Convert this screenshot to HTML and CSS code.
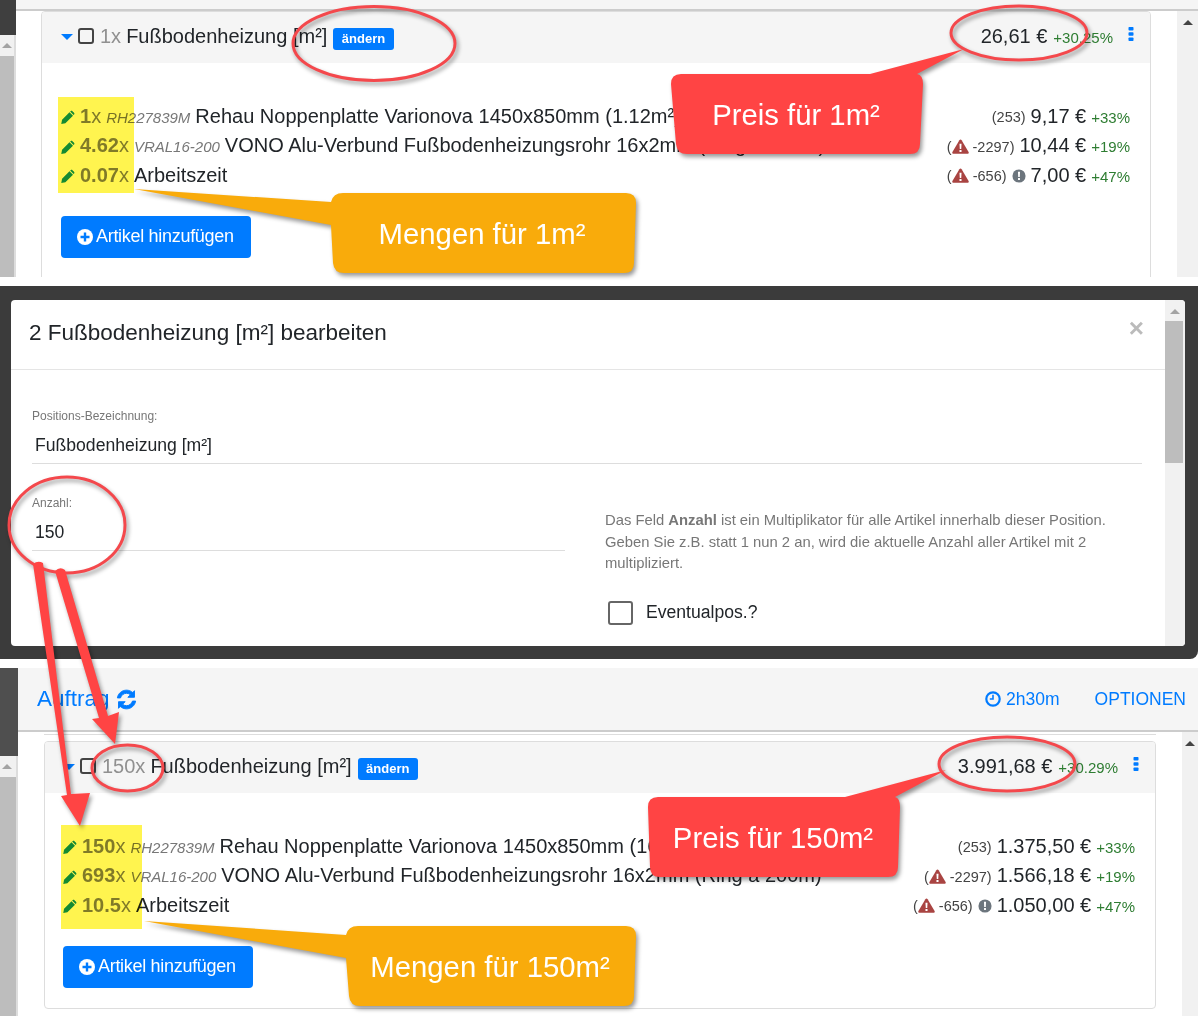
FILE: index.html
```html
<!DOCTYPE html>
<html lang="de">
<head>
    <meta charset="UTF-8">
    <meta name="viewport" content="width=device-width, initial-scale=1.0">
    <title>Fußbodenheizung Mengen und Preise</title>
    <link rel="stylesheet" href="styles.css">
</head>
<body>

<svg class="icon-defs" aria-hidden="true">
    <symbol id="i-pencil" viewBox="0 0 16 16">
        <path d="M9.700 2.500l4 4-8.700 8.600-4.700.9.900-4.800z M11 1.300c.6-.6 1.500-.6 2.100 0l1.800 1.800c.6.6.6 1.500 0 2.100l-.5.5-4-4z"/>
    </symbol>
    <symbol id="i-warn" viewBox="0 0 18 16">
        <path d="M9 .5c.5 0 .9.3 1.200.8l7.400 12.600c.5.900-.1 1.900-1.100 1.900H1.500c-1 0-1.600-1-1.100-1.900L7.800 1.300C8.100.8 8.500.5 9 .5z"/>
        <path fill="#fff" d="M7.900 5h2.200l-.3 5.600H8.200z M7.900 11.800h2.200v2H7.900z"/>
    </symbol>
    <symbol id="i-info" viewBox="0 0 16 16">
        <circle cx="8" cy="8" r="7.500"/>
        <path fill="#fff" d="M6.800 3.200h2.400l-.3 6H7.100z M6.900 10.400h2.200v2.300H6.900z"/>
    </symbol>
    <symbol id="i-plus" viewBox="0 0 16 16">
        <circle cx="8" cy="8" r="8" fill="#fff"/>
        <path fill="#007bff" d="M6.800 3.500h2.400v3.300h3.300v2.400H9.200v3.300H6.800V9.200H3.500V6.800h3.300z"/>
    </symbol>
    <symbol id="i-kebab" viewBox="0 0 6 16">
        <rect x="0.500" y="1" width="5" height="3.500" rx="0.800"/>
        <rect x="0.500" y="6.300" width="5" height="3.500" rx="0.800"/>
        <rect x="0.500" y="11.500" width="5" height="3.500" rx="0.800"/>
    </symbol>
</svg>

<div class="page">

    <!-- Oben: Position mit Menge 1 -->
    <section class="shot shot-single">
        <div class="rail-left">
            <div class="rail-dark"></div>
            <div class="rail-arrow"></div>
            <div class="rail-thumb"></div>
        </div>
        <div class="shot-main">
            <div class="strip"></div>
            <div class="shot-body">
                <div class="shot-content">
                    <div class="card">
                        <div class="card-header">
                            <span class="caret"></span>
                            <span class="box"></span>
                            <span class="qty-head">1x</span>
                            <span class="pos-name">Fußbodenheizung [m²]</span>
                            <span class="badge">ändern</span>
                            <span class="head-price">26,61 €</span>
                            <span class="pct">+30.25%</span>
                            <svg class="kebab"><use href="#i-kebab"/></svg>
                        </div>
                        <div class="card-body">
                            <div class="row">
                                <svg class="pencil"><use href="#i-pencil"/></svg>
                                <span class="qty"><b>1</b>x</span>
                                <i class="code">RH227839M</i>
                                <span class="name">Rehau Noppenplatte Varionova 1450x850mm (1.12m²)</span>
                                <span class="row-right">
                                    <span class="note">(253)</span>
                                    <span class="price">9,17 €</span>
                                    <span class="pct">+33%</span>
                                </span>
                            </div>
                            <div class="row">
                                <svg class="pencil"><use href="#i-pencil"/></svg>
                                <span class="qty"><b>4.62</b>x</span>
                                <i class="code">VRAL16-200</i>
                                <span class="name">VONO Alu-Verbund Fußbodenheizungsrohr 16x2mm (Ring a 200m)</span>
                                <span class="row-right">
                                    <span class="note">(<svg class="warn"><use href="#i-warn"/></svg> -2297)</span>
                                    <span class="price">10,44 €</span>
                                    <span class="pct">+19%</span>
                                </span>
                            </div>
                            <div class="row">
                                <svg class="pencil"><use href="#i-pencil"/></svg>
                                <span class="qty"><b>0.07</b>x</span>
                                <span class="name">Arbeitszeit</span>
                                <span class="row-right">
                                    <span class="note">(<svg class="warn"><use href="#i-warn"/></svg> -656)</span>
                                    <svg class="info"><use href="#i-info"/></svg>
                                    <span class="price">7,00 €</span>
                                    <span class="pct">+47%</span>
                                </span>
                            </div>
                            <button class="add-btn"><svg class="plus"><use href="#i-plus"/></svg>Artikel hinzufügen</button>
                        </div>
                    </div>
                </div>
                <div class="rail-right"><div class="rail-right-arrow"></div></div>
            </div>
        </div>
    </section>

    <!-- Mitte: Dialog -->
    <section class="shot-modal">
        <div class="modal">
            <div class="modal-main">
                <div class="modal-header">
                    <h2 class="modal-title">2 Fußbodenheizung [m²] bearbeiten</h2>
                    <span class="modal-close">×</span>
                </div>
                <div class="modal-body">
                    <div class="field">
                        <label class="field-label">Positions-Bezeichnung:</label>
                        <div class="field-value">Fußbodenheizung [m²]</div>
                    </div>
                    <div class="modal-grid">
                        <div class="field">
                            <label class="field-label">Anzahl:</label>
                            <div class="field-value">150</div>
                        </div>
                        <div class="modal-help">
                            <p>Das Feld <b>Anzahl</b> ist ein Multiplikator für alle Artikel innerhalb dieser Position. Geben Sie z.B. statt 1 nun 2 an, wird die aktuelle Anzahl aller Artikel mit 2 multipliziert.</p>
                            <div class="check-row">
                                <span class="check-box"></span>
                                <span>Eventualpos.?</span>
                            </div>
                        </div>
                    </div>
                </div>
            </div>
            <div class="modal-scroll">
                <div class="modal-scroll-arrow"></div>
                <div class="modal-scroll-thumb"></div>
            </div>
        </div>
    </section>

    <!-- Unten: Auftrag mit Menge 150 -->
    <section class="shot shot-order">
        <div class="rail-left">
            <div class="rail-dark"></div>
            <div class="rail-arrow"></div>
            <div class="rail-thumb"></div>
        </div>
        <div class="shot-main">
            <div class="toolbar">
                <span class="toolbar-title">Auftrag</span>
                <svg class="refresh" viewBox="0 0 20 20">
                    <path d="M17.600 1.600v6.300h-6.300l2.400-2.400C12.700 4.600 11.400 4.100 10 4.100c-2.700 0-5 1.800-5.700 4.400H1.300C2 4.200 5.600 1.100 10 1.100c2.300 0 4.400.9 6 2.300z"/>
                    <path d="M2.400 18.400v-6.300h6.300l-2.400 2.400c1 .9 2.300 1.400 3.700 1.400 2.700 0 5-1.800 5.700-4.400h3c-.7 4.300-4.300 7.400-8.700 7.400-2.300 0-4.400-.9-6-2.300z"/>
                </svg>
                <span class="toolbar-spacer"></span>
                <span class="toolbar-time">
                    <svg class="clock" viewBox="0 0 16 16">
                        <circle cx="8" cy="8" r="6.700" fill="none" stroke="currentColor" stroke-width="2.200"/>
                        <path d="M7.200 3.800h1.600v5H4.800V7.200h2.400z" fill="currentColor"/>
                    </svg>
                    2h30m
                </span>
                <span class="toolbar-link">OPTIONEN</span>
            </div>
            <div class="shot-body">
                <div class="shot-content">
                    <div class="card-sliver"></div>
                    <div class="card">
                        <div class="card-header">
                            <span class="caret"></span>
                            <span class="box"></span>
                            <span class="qty-head">150x</span>
                            <span class="pos-name">Fußbodenheizung [m²]</span>
                            <span class="badge">ändern</span>
                            <span class="head-price">3.991,68 €</span>
                            <span class="pct">+30.29%</span>
                            <svg class="kebab"><use href="#i-kebab"/></svg>
                        </div>
                        <div class="card-body">
                            <div class="row">
                                <svg class="pencil"><use href="#i-pencil"/></svg>
                                <span class="qty"><b>150</b>x</span>
                                <i class="code">RH227839M</i>
                                <span class="name">Rehau Noppenplatte Varionova 1450x850mm (168m²)</span>
                                <span class="row-right">
                                    <span class="note">(253)</span>
                                    <span class="price">1.375,50 €</span>
                                    <span class="pct">+33%</span>
                                </span>
                            </div>
                            <div class="row">
                                <svg class="pencil"><use href="#i-pencil"/></svg>
                                <span class="qty"><b>693</b>x</span>
                                <i class="code">VRAL16-200</i>
                                <span class="name">VONO Alu-Verbund Fußbodenheizungsrohr 16x2mm (Ring a 200m)</span>
                                <span class="row-right">
                                    <span class="note">(<svg class="warn"><use href="#i-warn"/></svg> -2297)</span>
                                    <span class="price">1.566,18 €</span>
                                    <span class="pct">+19%</span>
                                </span>
                            </div>
                            <div class="row">
                                <svg class="pencil"><use href="#i-pencil"/></svg>
                                <span class="qty"><b>10.5</b>x</span>
                                <span class="name">Arbeitszeit</span>
                                <span class="row-right">
                                    <span class="note">(<svg class="warn"><use href="#i-warn"/></svg> -656)</span>
                                    <svg class="info"><use href="#i-info"/></svg>
                                    <span class="price">1.050,00 €</span>
                                    <span class="pct">+47%</span>
                                </span>
                            </div>
                            <button class="add-btn"><svg class="plus"><use href="#i-plus"/></svg>Artikel hinzufügen</button>
                        </div>
                    </div>
                    <div class="card-next"></div>
                </div>
                <div class="rail-right"><div class="rail-right-arrow"></div></div>
            </div>
        </div>
    </section>

    <!-- Gelbe Markierungen -->
    <div class="marker marker-single"></div>
    <div class="marker marker-order"></div>

    <!-- Anmerkungen ueber dem Screenshot -->
    <svg class="notes" viewBox="0 0 1198 1016">
        <g class="note-shadow">
            <ellipse class="ring" cx="374" cy="43.500" rx="81" ry="37"/>
            <ellipse class="ring" cx="1019" cy="33" rx="68" ry="27"/>
            <ellipse class="ring" cx="67" cy="525" rx="58" ry="48"/>
            <ellipse class="ring" cx="127.500" cy="768" rx="35.500" ry="23"/>
            <ellipse class="ring" cx="1007" cy="764" rx="68" ry="27"/>

            <path class="fill-red" d="M33 564 Q38 560 43 563 L71 794 L90 793 L80 826 L61 796 L67 795 Z"/>
            <path class="fill-red" d="M55 571 Q60 566 65 570 L108 716 L119 712 L115 744 L92 719 L99 718 Z"/>

            <path class="fill-red" d="M681 74 L870 74 L964 49 L917 74 Q923 75 923 84 L920 144 Q920 154 910 154 L687 154 Q677 154 676 144 L671 84 Q671 74 681 74 Z"/>
            <path class="fill-orange" d="M134 189 L331 202 Q333 193 343 193 L626 193 Q636 193 636 203 L634 263 Q634 273 624 273 L344 273 Q334 273 333 263 L331 225 Z"/>
            <path class="fill-red" d="M658 797 L845 797 L946 770 L895 797 Q900 798 900 807 L898 867 Q898 877 888 877 L660 877 Q650 877 650 867 L648 807 Q648 797 658 797 Z"/>
            <path class="fill-orange" d="M144 921 L346 935 Q348 926 358 926 L626 926 Q636 926 636 936 L634 996 Q634 1006 624 1006 L360 1006 Q350 1006 349 996 L346 958 Z"/>
        </g>
        <text class="note-text" x="796" y="125">Preis für 1m²</text>
        <text class="note-text" x="482" y="244">Mengen für 1m²</text>
        <text class="note-text" x="773" y="848">Preis für 150m²</text>
        <text class="note-text" x="490" y="977">Mengen für 150m²</text>
    </svg>

</div>

</body>
</html>
```

FILE: styles.css
```css
* {
    box-sizing: border-box;
}
html, body {
    margin: 0;
    padding: 0;
    background-color: #fff;
}
body {
    font-family: "Liberation Sans", Arial, sans-serif;
    color: #212529;
}
.icon-defs {
    position: absolute;
    width: 0;
    height: 0;
}
.page {
    position: relative;
    width: 1198px;
    height: 1016px;
    overflow: hidden;
    background-color: #fff;
}

/* Screenshot frames */
.shot {
    display: flex;
    overflow: hidden;
}
.shot-single {
    height: 277px;
    margin-bottom: 9px;
}
.shot-order {
    height: 348px;
    margin-top: 9px;
}
.rail-left {
    flex: none;
    display: flex;
    flex-direction: column;
}
.shot-single .rail-left {
    width: 16px;
}
.shot-order .rail-left {
    width: 18px;
}
.rail-dark {
    background-color: #3f3f3f;
}
.shot-single .rail-dark {
    height: 35px;
}
.shot-order .rail-dark {
    height: 88px;
    background-color: #4f4f4f;
}
.rail-arrow {
    position: relative;
    height: 21px;
    background-color: #f1f1f1;
    border-right: 2px solid #ddd;
}
.rail-arrow::after {
    content: "";
    position: absolute;
    left: 2px;
    top: 8px;
    border-left: 5px solid transparent;
    border-right: 5px solid transparent;
    border-bottom: 5px solid #a3a3a3;
}
.rail-thumb {
    flex: 1;
    background-color: #bdbdbd;
    border-right: 2px solid #ddd;
}
.shot-main {
    flex: 1;
    display: flex;
    flex-direction: column;
    min-width: 0;
}
.strip {
    flex: none;
    height: 11px;
    background-color: #f5f5f5;
    border-bottom: 2px solid #ccc;
}
.shot-body {
    flex: 1;
    display: flex;
    min-height: 0;
}
.shot-content {
    flex: 1;
    min-width: 0;
    padding: 0 26px;
}
.shot-single .shot-content {
    padding-left: 25px;
}
.rail-right {
    flex: none;
    position: relative;
    background-color: #f1f1f1;
}
.shot-single .rail-right {
    width: 21px;
}
.shot-order .rail-right {
    width: 16px;
}
.rail-right-arrow {
    margin: 9px auto 0;
    width: 0;
    border-left: 5px solid transparent;
    border-right: 5px solid transparent;
    border-bottom: 5px solid #444;
}

/* Card */
.card {
    border: 1px solid #ddd;
    border-radius: 4px;
    overflow: hidden;
    background-color: #fff;
}
.shot-single .card {
    min-height: 290px;
}
.card-sliver {
    height: 3px;
    border-bottom: 1px solid #ddd;
    margin-bottom: 6px;
}
.card-next {
    height: 10px;
    margin-top: 7px;
    border-top: 1px solid #ddd;
}
.card-header {
    display: flex;
    align-items: center;
    height: 51px;
    padding: 0 16px 3px 19px;
    background-color: #f5f5f5;
    font-size: 20px;
}
.shot-order .card-header {
    padding-left: 18px;
}
.caret {
    width: 0;
    margin-right: 5px;
    margin-top: 1px;
    border-left: 6px solid transparent;
    border-right: 6px solid transparent;
    border-top: 6px solid #007bff;
}
.box {
    width: 16px;
    height: 16px;
    border: 2px solid #444;
    border-radius: 3px;
    margin-right: 6px;
}
.qty-head {
    color: #909090;
    margin-right: 5px;
}
.badge {
    margin: 5px 0 0 6px;
    height: 22px;
    line-height: 22px;
    padding: 0 8.500px;
    background-color: #007bff;
    color: #fff;
    font-size: 13px;
    font-weight: bold;
    border-radius: 3px;
}
.head-price {
    margin-left: auto;
}
.pct {
    font-size: 15px;
    color: #2e7d32;
    margin-left: 6px;
    position: relative;
    top: 1px;
}
.kebab {
    width: 6px;
    height: 16px;
    margin-left: 15px;
    fill: #007bff;
    position: relative;
    top: -2px;
}
.card-body {
    padding: 38.500px 20px 20px 19px;
}
.shot-order .card-body {
    padding-left: 18px;
}
.row {
    display: flex;
    align-items: center;
    height: 29.500px;
    font-size: 20px;
    white-space: nowrap;
}
.pencil {
    flex: none;
    width: 14px;
    height: 14px;
    margin-right: 5px;
    fill: #14909f;
    position: relative;
    top: 1px;
}
.qty {
    color: #808080;
    margin-right: 5px;
}
.code {
    font-size: 15px;
    color: #777;
    margin-right: 5px;
    position: relative;
    top: 1px;
}
.name {
    flex: none;
}
.row-right {
    margin-left: auto;
    display: flex;
    align-items: center;
}
.row-right .pct {
    margin-left: 5px;
}
.note {
    font-size: 14.500px;
    color: #444;
    margin-right: 5px;
    position: relative;
    top: 1px;
}
.warn {
    width: 17px;
    height: 15px;
    fill: #a94442;
    vertical-align: -2px;
}
.info {
    width: 14px;
    height: 14px;
    fill: #6c757d;
    margin-right: 5px;
    position: relative;
    top: 1px;
}
.add-btn {
    display: flex;
    align-items: center;
    width: 190px;
    height: 42px;
    margin-top: 25.500px;
    padding: 0 0 0 16px;
    background-color: #007bff;
    color: #fff;
    border: none;
    border-radius: 4px;
    font-family: inherit;
    font-size: 18px;
    letter-spacing: -0.3px;
}
.plus {
    width: 16px;
    height: 16px;
    margin-right: 3px;
}

/* Dialog */
.shot-modal {
    height: 373px;
    padding: 14px 13px 13px 11px;
    background-color: #3b3b3b;
    border-radius: 0 0 8px 0;
    overflow: hidden;
}
.modal {
    display: flex;
    height: 346px;
    background-color: #fff;
    border-radius: 4px;
    overflow: hidden;
}
.modal-main {
    flex: 1;
    min-width: 0;
}
.modal-header {
    display: flex;
    align-items: center;
    justify-content: space-between;
    height: 70px;
    padding: 0 21px 4px 18px;
    border-bottom: 1px solid #e5e5e5;
}
.modal-title {
    margin: 0;
    font-size: 22.500px;
    font-weight: normal;
}
.modal-close {
    font-size: 26px;
    font-weight: bold;
    color: #bbb;
    margin-top: -8px;
}
.modal-body {
    padding: 39px 23px 0 21px;
}
.field-label {
    display: block;
    height: 14px;
    line-height: 14px;
    font-size: 12px;
    color: #777;
}
.field-value {
    height: 41px;
    line-height: 36px;
    padding: 4px 0 0 3px;
    font-size: 17.600px;
    border-bottom: 1px solid #ddd;
}
.modal-grid {
    display: grid;
    grid-template-columns: 533px 1fr;
    column-gap: 40px;
    margin-top: 32px;
}
.modal-help {
    color: #777;
    font-size: 14.800px;
    line-height: 21.500px;
}
.modal-help p {
    margin: 0;
    padding-top: 14px;
}
.check-row {
    display: flex;
    align-items: center;
    margin: 26px 0 0 3px;
    gap: 13px;
    font-size: 17.600px;
    color: #212529;
}
.check-box {
    width: 25px;
    height: 24px;
    border: 2px solid #666;
    border-radius: 3px;
}
.modal-scroll {
    flex: none;
    display: flex;
    flex-direction: column;
    width: 20px;
    background-color: #f1f1f1;
}
.modal-scroll-arrow {
    height: 21px;
    padding: 9px 0 0 5px;
}
.modal-scroll-arrow::after {
    content: "";
    display: block;
    width: 0;
    border-left: 5px solid transparent;
    border-right: 5px solid transparent;
    border-bottom: 5px solid #a3a3a3;
}
.modal-scroll-thumb {
    height: 142px;
    margin-right: 2px;
    background-color: #bdbdbd;
}

/* Toolbar */
.toolbar {
    flex: none;
    display: flex;
    align-items: center;
    height: 64px;
    padding: 0 12px 0 19px;
    background-color: #f5f5f5;
    border-bottom: 2px solid #ccc;
    color: #007bff;
    font-size: 17.500px;
}
.toolbar-title {
    font-size: 22.500px;
}
.refresh {
    width: 21px;
    height: 21px;
    margin-left: 6px;
    fill: #007bff;
    stroke: #007bff;
    stroke-width: 0.900;
}
.toolbar-spacer {
    flex: 1;
}
.clock {
    width: 16px;
    height: 16px;
    vertical-align: -2px;
}
.toolbar-link {
    margin-left: 35px;
}

/* Annotations */
.marker {
    position: absolute;
    background-color: #fff44f;
    mix-blend-mode: multiply;
}
.marker-single {
    left: 58px;
    top: 97px;
    width: 76px;
    height: 96px;
}
.marker-order {
    left: 61px;
    top: 825px;
    width: 81px;
    height: 104px;
}
.notes {
    position: absolute;
    left: 0;
    top: 0;
    width: 1198px;
    height: 1016px;
}
.note-shadow {
    filter: drop-shadow(2px 3px 2px rgba(0, 0, 0, 0.4));
}
.ring {
    fill: none;
    stroke: #f4484c;
    stroke-width: 3;
}
.fill-red {
    fill: #ff4444;
}
.fill-orange {
    fill: #f9ab0b;
}
.note-text {
    fill: #fff;
    font-size: 29.300px;
    text-anchor: middle;
}
```
